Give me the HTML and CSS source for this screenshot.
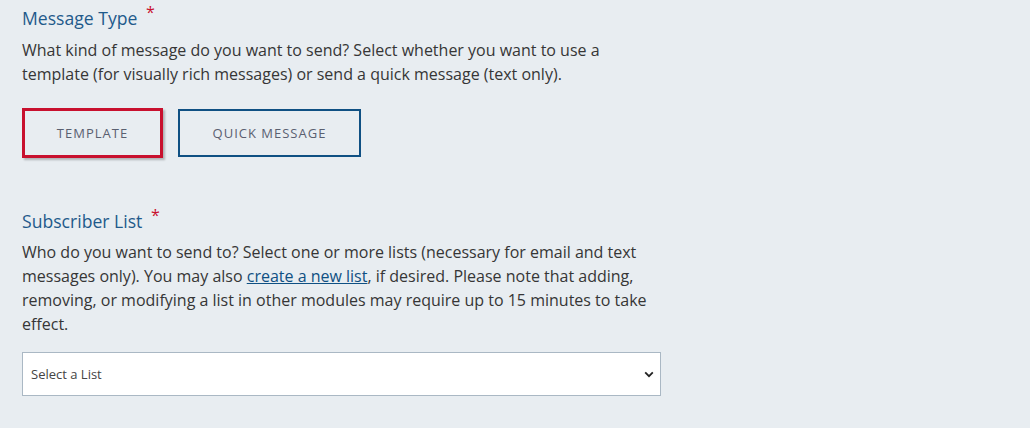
FILE: index.html
```html
<!DOCTYPE html>
<html lang="en">
<head>
<meta charset="utf-8">
<title>Message</title>
<link rel="stylesheet" href="styles.css">
</head>
<body>
<main class="form">
  <section class="field field-type">
    <h2 class="label">Message Type <span class="req">*</span></h2>
    <p class="help">What kind of message do you want to send? Select whether you want to use a template (for visually rich messages) or send a quick message (text only).</p>
    <div class="choices">
      <button class="choice choice-active" type="button">TEMPLATE</button>
      <button class="choice choice-outline" type="button">QUICK MESSAGE</button>
    </div>
  </section>
  <section class="field field-list">
    <h2 class="label">Subscriber List <span class="req">*</span></h2>
    <p class="help help-list">Who do you want to send to? Select one or more lists (necessary for email and text messages only). You may also <a href="#" class="link">create a new list</a>, if desired. Please note that adding, removing, or modifying a list in other modules may require up to 15 minutes to take effect.</p>
    <div class="select-wrap">
      <select class="select">
        <option>Select a List</option>
      </select>
      <svg class="chev" width="10" height="7" viewBox="0 0 10 7"><path d="M1.2 1.4 L5 5.2 L8.8 1.4" fill="none" stroke="#222" stroke-width="1.8"/></svg>
    </div>
  </section>
</main>
</body>
</html>
```

FILE: styles.css
```css
html, body {
  margin: 0;
  padding: 0;
  background: #e8edf1;
}
body {
  font-family: "Open Sans", "Noto Sans", sans-serif;
  color: #333;
}
.form {
  padding: 6px 0 0 22px;
  width: 640px;
}
.label {
  margin: 0;
  font-size: 17.6px;
  line-height: 24px;
  font-weight: 400;
  color: #1f5a8b;
}
.req {
  color: #c8102e;
  font-size: 16px;
  vertical-align: top;
  position: relative;
  top: -6px;
  margin-left: 4px;
}
.help {
  margin: 8px 0 0;
  font-size: 16px;
  line-height: 24px;
  color: #363636;
  width: 630px;
}
.help-list {
  margin-top: 7px;
}
.choices {
  display: flex;
  gap: 15px;
  margin-top: 22px;
}
.choice {
  font-family: "Open Sans", "Noto Sans", sans-serif;
  font-size: 13px;
  letter-spacing: 1px;
  color: #5a6070;
  background: transparent;
  height: 50px;
  padding: 0;
  cursor: pointer;
}
.choice-active {
  width: 141px;
  border: 3px solid #c8102e;
  box-shadow: 2px 2px 2px rgba(0,0,0,0.25);
}
.choice-outline {
  width: 183px;
  border: 2px solid #0f5083;
  margin-top: 1px;
  height: 48px;
}
.field-list {
  margin-top: 51px;
}
.link {
  color: #0f5083;
  text-decoration: underline;
}
.select-wrap {
  position: relative;
  margin-top: 16px;
  width: 639px;
}
.select {
  display: block;
  box-sizing: border-box;
  width: 100%;
  height: 44px;
  appearance: none;
  -webkit-appearance: none;
  background: #fff;
  border: 1px solid #aab8c4;
  border-radius: 0;
  padding: 0 8px;
  font-family: "Open Sans", "Noto Sans", sans-serif;
  font-size: 13px;
  color: #444;
}
.chev {
  position: absolute;
  right: 7px;
  top: 19px;
  pointer-events: none;
}
```
